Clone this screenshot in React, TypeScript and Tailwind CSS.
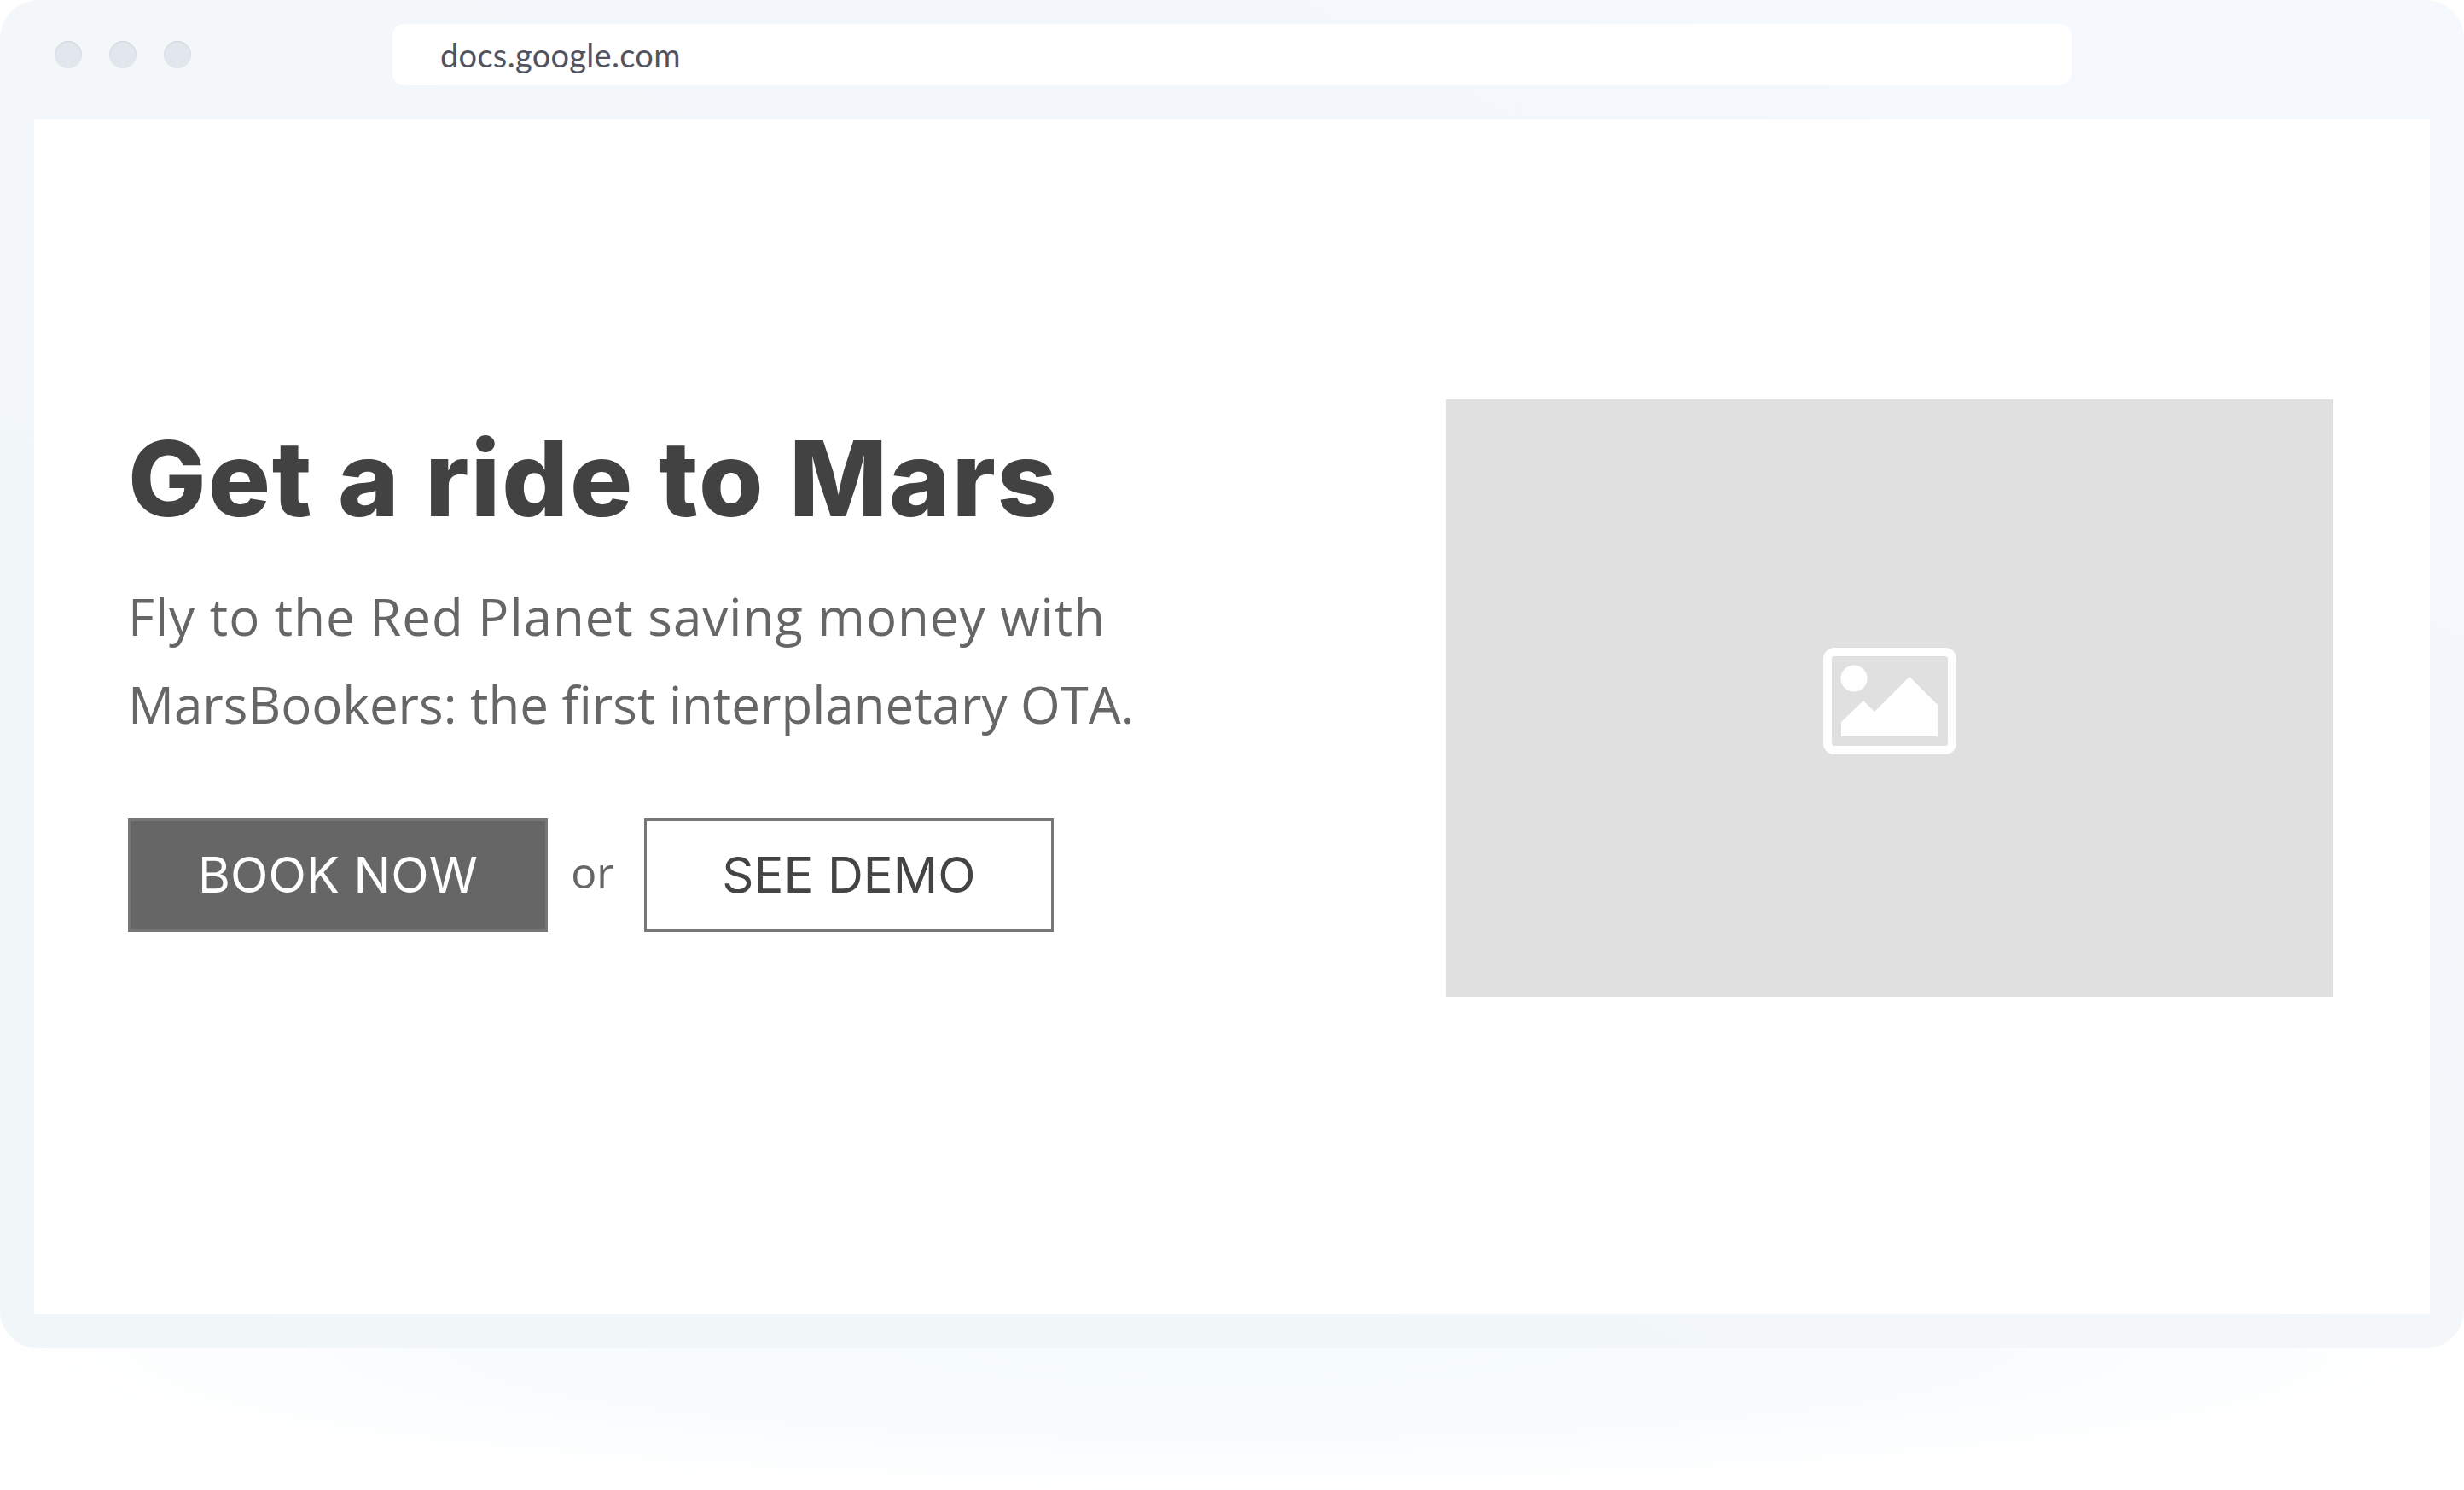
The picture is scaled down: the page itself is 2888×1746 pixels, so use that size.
import { type ReactNode } from "react";

const Dot = () => (
    <span className="h-[32px] w-[32px] rounded-full bg-[#e2e7ee] shadow-[inset_0_1px_2px_rgba(140,150,160,0.25)]" />
);

const ImageIcon = () => (
    <svg width="156" height="125" viewBox="0 0 156 125" fill="none">
        <rect x="5" y="5" width="146" height="115" rx="8" stroke="#ffffff" strokeWidth="10" />
        <circle cx="36" cy="36" r="15.5" fill="#ffffff" />
        <path d="M21 87 L47 62 L60 75 L101 34 L134 67 L134 104 L21 104 Z" fill="#ffffff" />
    </svg>
);

const Button = ({ dark, children }: { dark?: boolean; children: ReactNode }) => (
    <div
        className={
            "flex h-[133px] items-center justify-center border-[3px] border-[#777777] font-['Inter',sans-serif] text-[58px] font-normal tracking-[0.1px] " +
            (dark ? "w-[492px] bg-[#666666] text-white" : "w-[480px] bg-white text-[#444444]")
        }
    >
        {children}
    </div>
);

export default function App() {
    return (
        <div className="h-[1746px] w-[2888px] overflow-hidden bg-white">
            <div className="flex h-[1580px] flex-col rounded-[45px] bg-gradient-to-tr from-[#f1f6f8] to-[#f5f8fc] px-[40px] pb-[40px]">
                <div className="flex h-[140px] shrink-0 pt-[28px]">
                    <div className="flex h-[32px] translate-y-[20px] gap-[32px] pl-[24px]">
                        <Dot />
                        <Dot />
                        <Dot />
                    </div>
                    <div className="ml-[236px] flex h-[72px] w-[1968px] items-center rounded-[14px] bg-white pl-[56px] font-['Lato',sans-serif] text-[38px] tracking-[0.3px] text-[#53535f]">
                        docs.google.com
                    </div>
                </div>
                <div className="flex flex-1 items-start justify-between bg-white pl-[110px] pr-[113px] pt-[328px]">
                    <div className="flex flex-col pt-[23px]">
                        <h1 className="font-['Inter',sans-serif] text-[122px] font-extrabold leading-[140px] tracking-[1.9px] text-[#424242]">
                            Get a ride to Mars
                        </h1>
                        <p className="mt-[40px] font-['Open_Sans',sans-serif] text-[60px] leading-[103px] text-[#666666]">
                            <span className="tracking-[1px]">Fly to the Red Planet saving money with</span>
                            <br />
                            MarsBookers: the first interplanetary OTA.
                        </p>
                        <div className="mt-[82px] flex items-center">
                            <Button dark>BOOK NOW</Button>
                            <span className="w-[113px] pr-[8px] pb-[6px] text-center font-['Open_Sans',sans-serif] text-[50px] text-[#666666]">or</span>
                            <Button>SEE DEMO</Button>
                        </div>
                    </div>
                    <div className="flex h-[700px] w-[1040px] items-center justify-center bg-[#e0e0e0] pt-[6px]">
                        <ImageIcon />
                    </div>
                </div>
            </div>
            <div className="h-[166px] bg-[radial-gradient(ellipse_1500px_175px_at_50%_0%,#f6fbfe_0%,#f9fcfe_60%,#ffffff_100%)]" />
        </div>
    );
}
